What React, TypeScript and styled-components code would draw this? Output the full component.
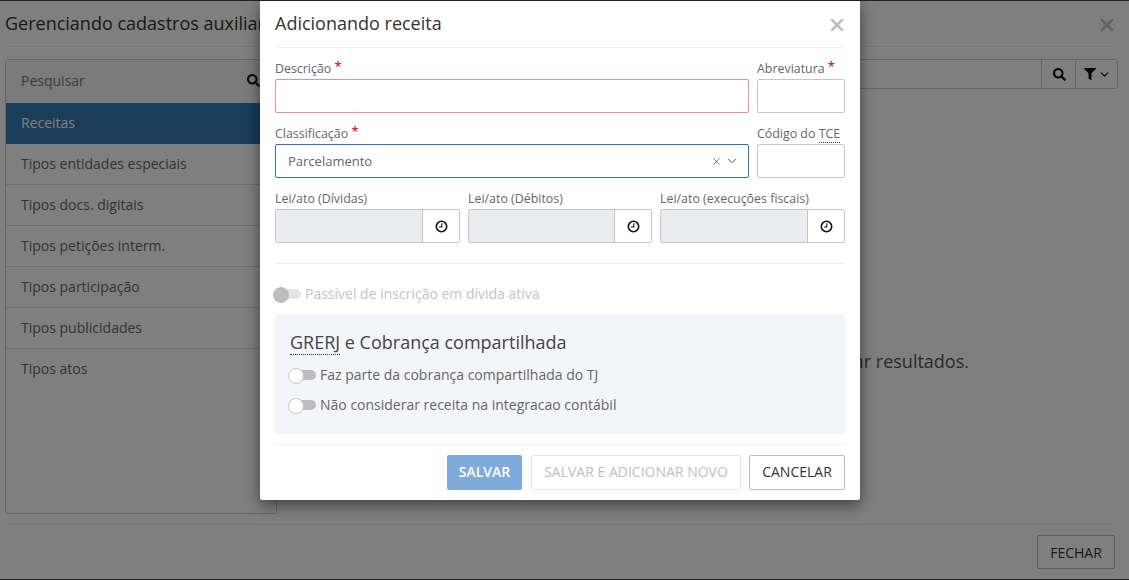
import React from 'react';
import styled, {createGlobalStyle} from "styled-components";
import {FaSearch, FaFilter} from "react-icons/fa";
import {ChevronDown, X} from "lucide-react";

const GlobalStyle = createGlobalStyle`
    html, body {
      margin: 0;
      height: 100%;
      overflow: hidden;
      background: #222;
      font-family: "Open Sans", "Liberation Sans", sans-serif;
    }
    * { box-sizing: border-box; }
`;

const sideItems = ["Tipos entidades especiais", "Tipos docs. digitais", "Tipos petições interm.", "Tipos participação", "Tipos publicidades", "Tipos atos"];

const ClockIcon: React.FC = () => (
    <svg width="13" height="13" viewBox="0 0 13 13" fill="none" stroke="#111">
        <circle cx="6.5" cy="6.5" r="5.2" strokeWidth="1.6" />
        <path d="M6.8 3.2V7H4" strokeWidth="1.1" />
    </svg>
);

const DateField: React.FC<{label: string}> = ({label}) => (
    <Field>
        <Label>{label}</Label>
        <InputGroup>
            <DisabledInput />
            <ClockButton><ClockIcon /></ClockButton>
        </InputGroup>
    </Field>
);

const App: React.FC = () => {
    return (
        <Screen>
            <GlobalStyle />

            <Page>
                <PageHeader>
                    <HeaderTitle>Gerenciando cadastros auxiliares</HeaderTitle>
                    <CloseIcon><X size={20} strokeWidth={3} color="#c4c4c4" /></CloseIcon>
                </PageHeader>

                <PageBody>
                    <SidePanel>
                        <SideSearch>
                            Pesquisar
                            <FaSearch size={13} color="#111" />
                        </SideSearch>
                        <SideItem $active>Receitas</SideItem>
                        {sideItems.map((item) => <SideItem key={item}>{item}</SideItem>)}
                    </SidePanel>

                    <Results>
                        <ResultsSearch>
                            <ResultsInput />
                            <ResultsButton $width={34}><FaSearch size={13} color="#111" /></ResultsButton>
                            <ResultsButton $width={42}>
                                <FaFilter size={12} color="#111" />
                                <ChevronDown size={13} strokeWidth={2.2} color="#111" />
                            </ResultsButton>
                        </ResultsSearch>
                        <EmptyText>Utilize os filtros para visualizar resultados.</EmptyText>
                    </Results>
                </PageBody>

                <PageFooter>
                    <FooterButton>FECHAR</FooterButton>
                </PageFooter>
            </Page>

            <Overlay />

            <Modal>
                <ModalHeader>
                    <HeaderTitle>Adicionando receita</HeaderTitle>
                    <CloseIcon><X size={20} strokeWidth={3} color="#bdbdbd" /></CloseIcon>
                </ModalHeader>

                <TopGrid>
                    <Field>
                        <Label>Descrição <Required>*</Required></Label>
                        <Input $error />
                    </Field>
                    <Field>
                        <Label>Abreviatura <Required>*</Required></Label>
                        <Input />
                    </Field>
                    <Field>
                        <Label>Classificação <Required>*</Required></Label>
                        <Select>
                            Parcelamento
                            <SelectIcons>
                                <X size={11} strokeWidth={1.6} color="#555" />
                                <ChevronDown size={14} strokeWidth={1.7} color="#555" />
                            </SelectIcons>
                        </Select>
                    </Field>
                    <Field>
                        <Label>Código do <Abbr>TCE</Abbr></Label>
                        <Input />
                    </Field>
                </TopGrid>

                <DateGrid>
                    <DateField label="Lei/ato (Dívidas)" />
                    <DateField label="Lei/ato (Débitos)" />
                    <DateField label="Lei/ato (execuções fiscais)" />
                </DateGrid>

                <Divider />

                <DisabledToggleRow>
                    <Toggle $disabled />
                    <ToggleText>Passível de inscrição em dívida ativa</ToggleText>
                </DisabledToggleRow>

                <Section>
                    <SectionTitle><Abbr>GRERJ</Abbr> e Cobrança compartilhada</SectionTitle>
                    <SectionToggle>
                        <Toggle />
                        <ToggleText>Faz parte da cobrança compartilhada do TJ</ToggleText>
                    </SectionToggle>
                    <SectionToggle>
                        <Toggle />
                        <ToggleText>Não considerar receita na integracao contábil</ToggleText>
                    </SectionToggle>
                </Section>

                <ModalFooter>
                    <PrimaryButton>SALVAR</PrimaryButton>
                    <GhostButton>SALVAR E ADICIONAR NOVO</GhostButton>
                    <DefaultButton>CANCELAR</DefaultButton>
                </ModalFooter>
            </Modal>
        </Screen>
    );
};

export default App;

const Screen = styled.div`
    position: relative;
    width: 1129px;
    height: 580px;
    padding: 1px 0;
    overflow: hidden;
`;

const Page = styled.div`
    height: 578px;
    background: #fff;
    padding: 0 14px 0 5px;
    display: flex;
    flex-direction: column;
`;

const PageHeader = styled.div`
    height: 46px;
    display: flex;
    align-items: center;
    justify-content: space-between;
    border-bottom: 1px solid #eee;
`;

const HeaderTitle = styled.div`
    padding-bottom: 2px;
    font-size: 18px;
    color: #333;
`;

const CloseIcon = styled.span`
    display: flex;
    margin: 2px -1.5px 0 0;
`;

const PageBody = styled.div`
    flex: 1;
    display: flex;
    padding-top: 12px;
    gap: 10px;
    border-bottom: 1px solid #eee;
`;

const SidePanel = styled.div`
    width: 272px;
    height: 455px;
    border: 1px solid #ccc;
    border-radius: 3px;
`;

const SideSearch = styled.div`
    height: 43px;
    padding: 0 16px 2px 15px;
    display: flex;
    align-items: center;
    justify-content: space-between;
    font-size: 14px;
    color: #777;
    background: #f7f7f7;
`;

const SideItem = styled.div<{$active?: boolean}>`
    height: 41px;
    padding: 0 15px 2px;
    display: flex;
    align-items: center;
    font-size: 14px;
    color: ${(props) => props.$active ? "#fff" : "#666"};
    background: ${(props) => props.$active ? "#337ab7" : "transparent"};
    border-bottom: 1px solid ${(props) => props.$active ? "#337ab7" : "#ddd"};
    &:last-child {
      border-bottom: none;
    }
`;

const Results = styled.div`
    flex: 1;
    display: flex;
    flex-direction: column;
    min-width: 0;
    margin-right: -3px;
`;

const ResultsSearch = styled.div`
    height: 30px;
    display: flex;
    border: 1px solid #ccc;
    border-radius: 3px;
`;

const ResultsInput = styled.div`
    flex: 1;
`;

const ResultsButton = styled.div<{$width: number}>`
    width: ${(props) => props.$width}px;
    display: flex;
    align-items: center;
    justify-content: center;
    gap: 2px;
    padding-left: 2px;
    border-left: 1px solid #ccc;
`;

const EmptyText = styled.div`
    margin-top: 260px;
    font-size: 18px;
    color: #555;
    text-align: right;
    padding-right: 149px;
`;

const PageFooter = styled.div`
    height: 54px;
    display: flex;
    align-items: center;
    justify-content: flex-end;
`;

const FooterButton = styled.div`
    width: 78px;
    height: 34px;
    display: flex;
    align-items: center;
    justify-content: center;
    border: 1px solid #bbb;
    border-radius: 2px;
    font-size: 14px;
    color: #333;
`;

const Overlay = styled.div`
    position: absolute;
    inset: 1px 0;
    background: rgba(0, 0, 0, 0.5);
`;

const Modal = styled.div`
    position: absolute;
    top: 1px;
    left: 260px;
    width: 600px;
    height: 499px;
    padding: 0 15px;
    background: #fff;
    border-radius: 0 0 2px 2px;
    box-shadow: 0 5px 15px rgba(0, 0, 0, 0.5);
    display: flex;
    flex-direction: column;
`;

const ModalHeader = styled.div`
    height: 47px;
    flex: none;
    display: flex;
    align-items: center;
    justify-content: space-between;
    border-bottom: 1px solid #f0f0f0;
    padding-bottom: 1px;
`;

const TopGrid = styled.div`
    display: grid;
    grid-template-columns: 474px 88px;
    column-gap: 8px;
    margin-top: 11px;
`;

const Field = styled.div`
    display: flex;
    flex-direction: column;
    min-width: 0;
    height: 65px;
`;

const Label = styled.label`
    height: 20px;
    font-size: 12.4px;
    line-height: 20px;
    color: #666;
    white-space: nowrap;
`;

const Required = styled.span`
    vertical-align: 2px;
    font-size: 13px;
    font-weight: 600;
    line-height: 10px;
    color: #e02020;
`;

const Abbr = styled.span`
    border-bottom: 1px dotted #333;
`;

const Input = styled.div<{$error?: boolean}>`
    height: 34px;
    border: 1px solid ${(props) => props.$error ? "#ee8c90" : "#c6c6c6"};
    border-radius: 2px;
    background: #fff;
`;

const Select = styled.div`
    height: 34px;
    padding: 0 12px;
    display: flex;
    align-items: center;
    justify-content: space-between;
    border: 1px solid #2f72bb;
    border-radius: 2px;
    font-size: 13px;
    color: #666;
`;

const SelectIcons = styled.div`
    display: flex;
    align-items: center;
    gap: 3px;
    margin-right: -3px;
`;

const DateGrid = styled.div`
    display: grid;
    grid-template-columns: 185px 184px 185px;
    column-gap: 8px;
`;

const InputGroup = styled.div`
    height: 34px;
    display: flex;
    border: 1px solid #c6c6c6;
    border-radius: 2px;
`;

const DisabledInput = styled.div`
    flex: 1;
    background: #ebecf0;
`;

const ClockButton = styled.div`
    width: 37px;
    display: flex;
    align-items: center;
    justify-content: center;
    border-left: 1px solid #c6c6c6;
`;

const Divider = styled.div`
    height: 1px;
    flex: none;
    margin-top: 9px;
    background: #eee;
`;

const ToggleRow = styled.div`
    display: flex;
    align-items: center;
    gap: 4px;
    margin-left: -2px;
    font-size: 14px;
    color: #666;
    white-space: nowrap;
`;

const ToggleText = styled.span`
    padding-bottom: 2px;
`;

const SectionToggle = styled(ToggleRow)`
    height: 30px;
`;

const DisabledToggleRow = styled(ToggleRow)`
    height: 50px;
    flex: none;
    padding-top: 10px;
    color: #c4c4c4;
`;

const Toggle = styled.span<{$disabled?: boolean}>`
    position: relative;
    display: inline-block;
    flex: none;
    width: 27px;
    height: 10px;
    margin-left: 1px;
    border-radius: 5px;
    background: ${(props) => props.$disabled ? "#e4e4e4" : "#bdbdbd"};
    &::before {
      content: "";
      position: absolute;
      top: -2px;
      left: -1px;
      width: 14px;
      height: 14px;
      border-radius: 50%;
      background: ${(props) => props.$disabled ? "#bdbdbd" : "#fff"};
      border: 1px solid ${(props) => props.$disabled ? "#bdbdbd" : "#c6c6c6"};
    }
`;

const Section = styled.div`
    height: 120px;
    flex: none;
    padding: 14px 12px 0 15px;
    background: #f4f5fa;
`;

const SectionTitle = styled.div`
    height: 32px;
    font-size: 18px;
    line-height: 29px;
    color: #444;
`;

const ModalFooter = styled.div`
    margin-top: 10px;
    padding-top: 10px;
    border-top: 1px solid #f0f0f0;
    display: flex;
    justify-content: flex-end;
    gap: 8px;
`;

const BaseButton = styled.div`
    height: 35px;
    padding-bottom: 2px;
    display: flex;
    align-items: center;
    justify-content: center;
    border-radius: 2px;
    font-size: 14px;
    white-space: nowrap;
`;

const PrimaryButton = styled(BaseButton)`
    width: 75px;
    margin-right: 1px;
    background: #7eaadc;
    color: #fff;
    font-weight: 600;
`;

const GhostButton = styled(BaseButton)`
    width: 210px;
    border: 1px solid #e5e5e5;
    color: #c0c0c0;
`;

const DefaultButton = styled(BaseButton)`
    width: 96px;
    border: 1px solid #bdbdbd;
    color: #333;
`;
